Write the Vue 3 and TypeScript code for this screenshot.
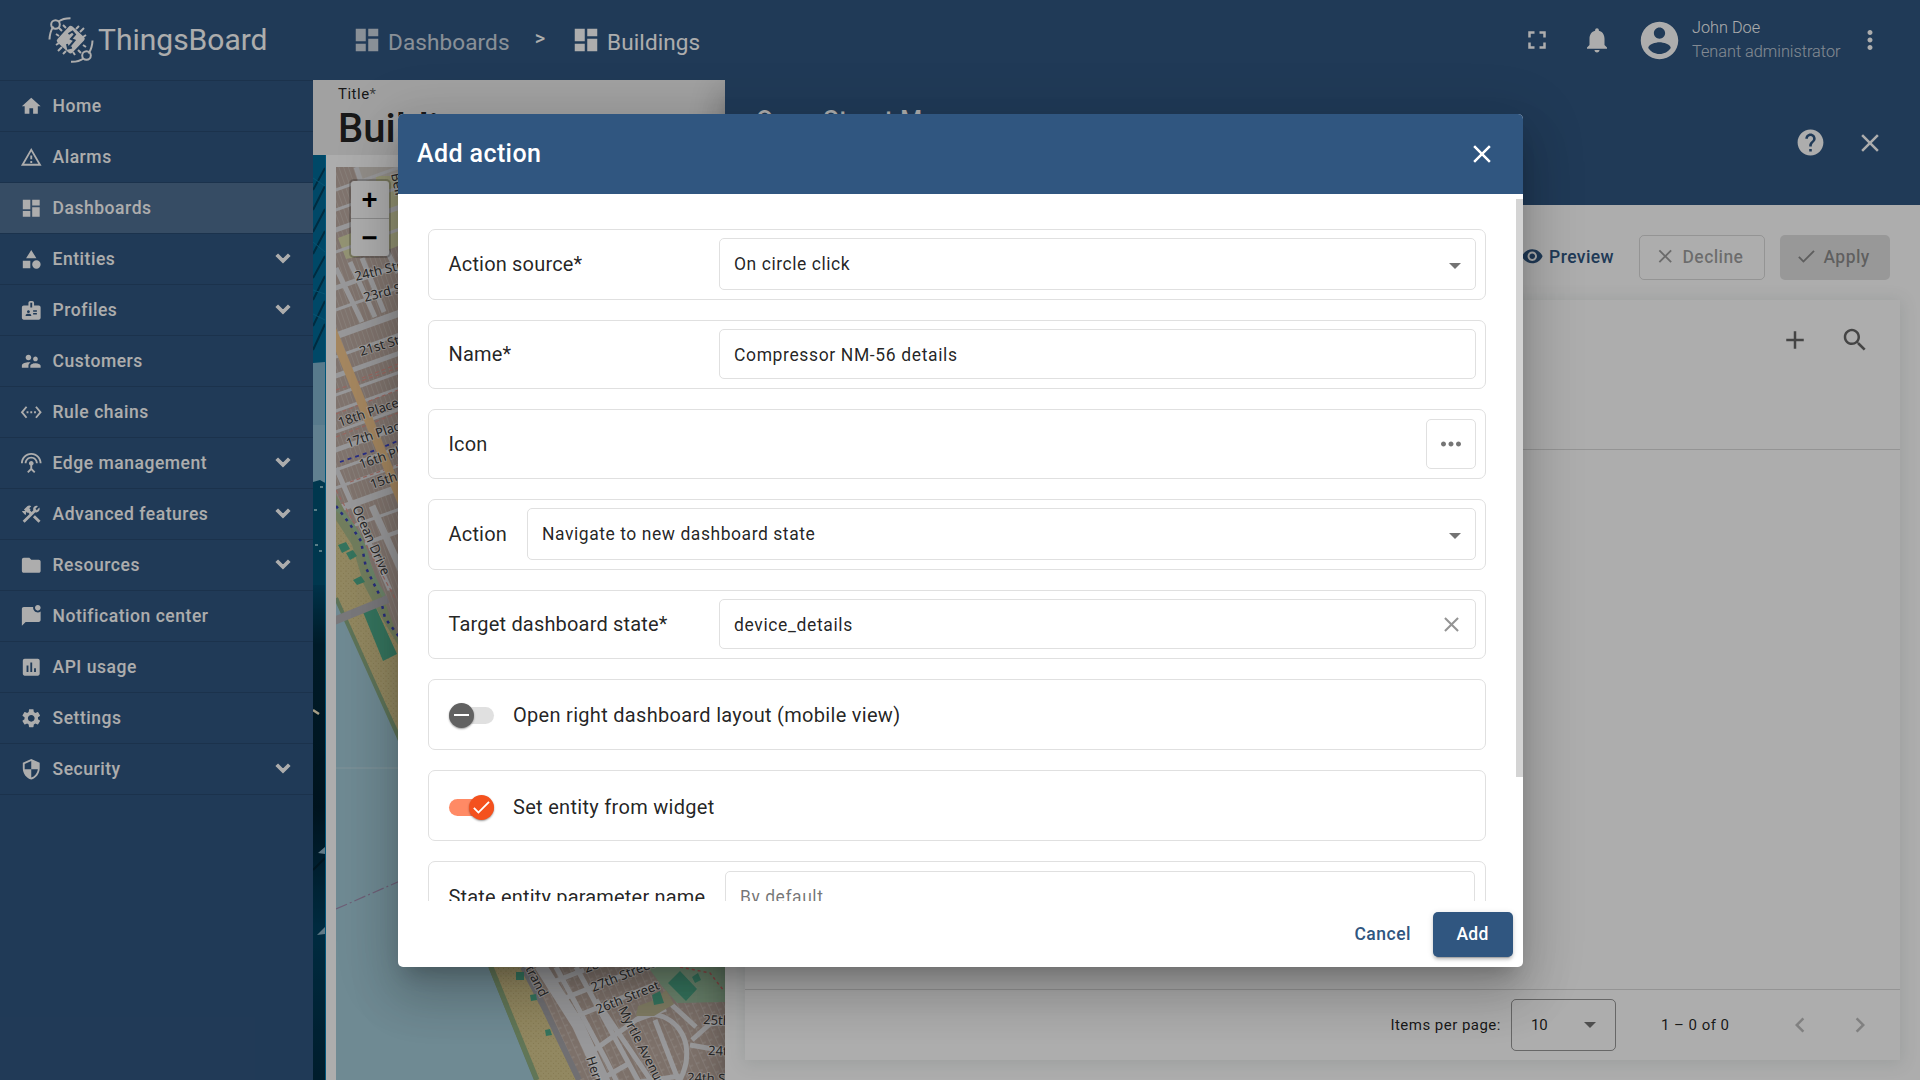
<script setup lang="ts">
interface MenuItem {
  label: string
  icon: string
  expandable?: boolean
  active?: boolean
}

const icons: Record<string, string> = {
  home: 'M10 20v-6h4v6h5v-8h3L12 3 2 12h3v8z',
  alarms: 'M12 5.99 19.53 19H4.47L12 5.99M12 2 1 21h22L12 2zm1 14h-2v2h2v-2zm0-6h-2v4h2v-4z',
  dashboard: 'M3 13h8V3H3v10zm0 8h8v-6H3v6zm10 0h8V11h-8v10zm0-18v6h8V3h-8z',
  entities: 'M12 2 6.5 11h11zM17.5 13a4.5 4.5 0 1 0 0 9 4.5 4.5 0 0 0 0-9zM3 13.5h8v8H3z',
  profiles:
    'M20 7h-5V4c0-1.1-.9-2-2-2h-2c-1.100 0-2 .9-2 2v3H4c-1.100 0-2 .9-2 2v11c0 1.100.9 2 2 2h16c1.100 0 2-.9 2-2V9c0-1.100-.9-2-2-2zM9 12c.83 0 1.500.67 1.500 1.500S9.830 15 9 15s-1.500-.67-1.500-1.500S8.170 12 9 12zm3 6H6v-.75c0-1 2-1.500 3-1.500s3 .5 3 1.500V18zm1-9h-2V4h2v5zm5 7.500h-4V15h4v1.500zm0-3h-4V12h4v1.500z',
  customers:
    'M16.500 12c1.380 0 2.490-1.120 2.490-2.500S17.880 7 16.500 7 14 8.120 14 9.500s1.120 2.500 2.500 2.500zM9 11c1.660 0 2.990-1.340 2.990-3S10.660 5 9 5 6 6.340 6 8s1.340 3 3 3zm7.500 3c-1.830 0-5.500.92-5.500 2.750V19h11v-2.250c0-1.830-3.670-2.750-5.500-2.750zM9 13c-2.330 0-7 1.170-7 3.500V19h7v-2.250c0-.85.33-2.340 2.370-3.470C10.500 13.100 9.660 13 9 13z',
  rules:
    'M7.770 6.760 6.230 5.480.82 12l5.410 6.520 1.540-1.280L3.420 12l4.350-5.240zM7 13h2v-2H7v2zm10-2h-2v2h2v-2zm-6 2h2v-2h-2v2zm6.770-7.520-1.540 1.280L20.580 12l-4.350 5.240 1.540 1.280L23.180 12l-5.410-6.520z',
  edge:
    'M12 5c-3.870 0-7 3.130-7 7h2c0-2.760 2.240-5 5-5s5 2.240 5 5h2c0-3.870-3.130-7-7-7zm1 9.290c.88-.39 1.500-1.260 1.500-2.290 0-1.380-1.120-2.500-2.500-2.500S9.500 10.620 9.500 12c0 1.020.62 1.900 1.500 2.290v3.300L7.590 21 9 22.410l3-3 3 3L16.410 21 13 17.590v-3.300zM12 1C5.930 1 1 5.930 1 12h2c0-4.970 4.030-9 9-9s9 4.030 9 9h2c0-6.070-4.930-11-11-11z',
  tools:
    'm13.783 15.172 2.121-2.121 5.996 5.996-2.121 2.121zM17.500 10c1.930 0 3.500-1.570 3.500-3.500 0-.58-.16-1.120-.41-1.600l-2.700 2.700-1.490-1.490 2.700-2.700c-.48-.25-1.020-.41-1.600-.41C15.570 3 14 4.570 14 6.500c0 .41.080.8.210 1.160l-1.850 1.850-1.780-1.780.71-.71-1.410-1.410L12 3.490c-1.170-1.170-3.070-1.170-4.240 0L4.220 7.030l1.410 1.410H2.810l-.71.71 3.540 3.540.71-.71V9.150l1.410 1.410.71-.71 1.780 1.780-7.410 7.410 2.120 2.120L16.340 9.790c.36.13.75.21 1.160.21z',
  folder: 'M10 4H4c-1.100 0-1.990.9-1.990 2L2 18c0 1.100.9 2 2 2h16c1.100 0 2-.9 2-2V8c0-1.100-.9-2-2-2h-8l-2-2z',
  notify:
    'M22 6.980V16c0 1.100-.9 2-2 2H6l-4 4V4c0-1.100.9-2 2-2h10.100c-.06.320-.1.660-.1 1 0 2.760 2.240 5 5 5 1.130 0 2.160-.39 3-1.020zM16 3c0 1.660 1.340 3 3 3s3-1.340 3-3-1.340-3-3-3-3 1.340-3 3z',
  chart: 'M19 3H5c-1.100 0-2 .9-2 2v14c0 1.100.9 2 2 2h14c1.100 0 2-.9 2-2V5c0-1.100-.9-2-2-2zM9 17H7v-7h2v7zm4 0h-2V7h2v10zm4 0h-2v-4h2v4z',
  settings:
    'M19.140 12.940c.04-.3.060-.61.060-.94 0-.32-.02-.64-.07-.94l2.030-1.580c.18-.14.23-.41.120-.61l-1.920-3.320c-.12-.22-.37-.29-.59-.22l-2.390.96c-.5-.38-1.030-.7-1.620-.94l-.36-2.540c-.04-.24-.24-.41-.48-.41h-3.840c-.24 0-.43.17-.47.41l-.36 2.540c-.59.24-1.130.57-1.620.94l-2.390-.96c-.22-.08-.47 0-.59.22L2.740 8.870c-.12.21-.08.47.120.61l2.030 1.580c-.05.3-.09.630-.09.940s.02.640.07.940l-2.030 1.580c-.18.140-.23.410-.12.610l1.920 3.320c.12.220.37.290.59.220l2.390-.96c.5.380 1.030.7 1.620.94l.36 2.540c.05.240.24.410.48.410h3.840c.24 0 .44-.17.470-.41l.36-2.540c.59-.24 1.130-.56 1.620-.94l2.390.96c.22.080.47 0 .59-.22l1.920-3.320c.12-.22.070-.47-.12-.61l-2.010-1.580zM12 15.600c-1.980 0-3.600-1.620-3.600-3.600s1.620-3.600 3.600-3.600 3.600 1.620 3.600 3.600-1.620 3.600-3.600 3.600z',
  security:
    'M12 1 3 5v6c0 5.550 3.840 10.740 9 12 5.160-1.260 9-6.450 9-12V5l-9-4zm0 10.990h7c-.53 4.120-3.280 7.790-7 8.940V12H5V6.300l7-3.110v8.800z',
  expand: 'M7.410 7.840 12 12.420l4.590-4.580L18 9.250l-6 6-6-6z',
  fullscreen: 'M7 14H5v5h5v-2H7v-3zm-2-4h2V7h3V5H5v5zm12 7h-3v2h5v-5h-2v3zM14 5v2h3v3h2V5h-5z',
  bell: 'M12 22c1.100 0 2-.9 2-2h-4c0 1.100.89 2 2 2zm6-6v-5c0-3.070-1.640-5.640-4.500-6.320V4c0-.83-.67-1.500-1.500-1.500s-1.500.67-1.500 1.500v.68C7.630 5.360 6 7.920 6 11v5l-2 2v1h16v-1l-2-2z',
  account:
    'M12 2C6.480 2 2 6.480 2 12s4.480 10 10 10 10-4.480 10-10S17.520 2 12 2zm0 3c1.660 0 3 1.340 3 3s-1.340 3-3 3-3-1.340-3-3 1.340-3 3-3zm0 14.200c-2.500 0-4.710-1.280-6-3.220.03-1.990 4-3.080 6-3.080 1.990 0 5.970 1.090 6 3.080-1.290 1.940-3.500 3.220-6 3.220z',
  more: 'M12 8c1.100 0 2-.9 2-2s-.9-2-2-2-2 .9-2 2 .9 2 2 2zm0 2c-1.100 0-2 .9-2 2s.9 2 2 2 2-.9 2-2-.9-2-2-2zm0 6c-1.100 0-2 .9-2 2s.9 2 2 2 2-.9 2-2-.9-2-2-2z',
  dots: 'M6 10c-1.100 0-2 .9-2 2s.9 2 2 2 2-.9 2-2-.9-2-2-2zm12 0c-1.100 0-2 .9-2 2s.9 2 2 2 2-.9 2-2-.9-2-2-2zm-6 0c-1.100 0-2 .9-2 2s.9 2 2 2 2-.9 2-2-.9-2-2-2z',
  help: 'M12 2C6.480 2 2 6.480 2 12s4.480 10 10 10 10-4.480 10-10S17.520 2 12 2zm1 17h-2v-2h2v2zm2.070-7.750-.9.920C13.450 12.900 13 13.500 13 15h-2v-.5c0-1.100.45-2.100 1.170-2.830l1.240-1.260c.37-.36.590-.86.590-1.410 0-1.100-.9-2-2-2s-2 .9-2 2H8c0-2.210 1.790-4 4-4s4 1.790 4 4c0 .88-.36 1.680-.93 2.250z',
  close: 'M19 6.410 17.590 5 12 10.590 6.410 5 5 6.410 10.590 12 5 17.590 6.410 19 12 13.410 17.590 19 19 17.590 13.410 12z',
  check: 'M9 16.170 4.830 12l-1.420 1.410L9 19 21 7l-1.410-1.410z',
  eye: 'M12 4.500C7 4.500 2.730 7.610 1 12c1.730 4.390 6 7.500 11 7.500s9.270-3.110 11-7.500c-1.730-4.390-6-7.500-11-7.500zM12 17c-2.760 0-5-2.240-5-5s2.240-5 5-5 5 2.240 5 5-2.240 5-5 5zm0-8c-1.660 0-3 1.340-3 3s1.340 3 3 3 3-1.340 3-3-1.340-3-3-3z',
  add: 'M19 13h-6v6h-2v-6H5v-2h6V5h2v6h6v2z',
  search:
    'M15.500 14h-.79l-.28-.27C15.410 12.590 16 11.110 16 9.500 16 5.910 13.090 3 9.500 3S3 5.910 3 9.500 5.910 16 9.500 16c1.610 0 3.090-.59 4.230-1.570l.27.280v.79l5 4.990L20.490 19l-4.990-5zm-6 0C7.010 14 5 11.990 5 9.500S7.010 5 9.500 5 14 7.010 14 9.500 11.990 14 9.500 14z',
  prev: 'M15.410 7.410 14 6l-6 6 6 6 1.410-1.410L10.830 12z',
  next: 'M10 6 8.590 7.410 13.170 12l-4.580 4.590L10 18l6-6z',
}

const menu: MenuItem[] = [
  { label: 'Home', icon: 'home' },
  { label: 'Alarms', icon: 'alarms' },
  { label: 'Dashboards', icon: 'dashboard', active: true },
  { label: 'Entities', icon: 'entities', expandable: true },
  { label: 'Profiles', icon: 'profiles', expandable: true },
  { label: 'Customers', icon: 'customers' },
  { label: 'Rule chains', icon: 'rules' },
  { label: 'Edge management', icon: 'edge', expandable: true },
  { label: 'Advanced features', icon: 'tools', expandable: true },
  { label: 'Resources', icon: 'folder', expandable: true },
  { label: 'Notification center', icon: 'notify' },
  { label: 'API usage', icon: 'chart' },
  { label: 'Settings', icon: 'settings' },
  { label: 'Security', icon: 'security', expandable: true },
]

interface MapLabel {
  text: string
  x: number
  y: number
  angle: number
}

const mapLabels: MapLabel[] = [
  { text: 'Bell', x: 391, y: 174, angle: 78 },
  { text: '24th Street', x: 356, y: 281, angle: -14 },
  { text: '23rd Street', x: 365, y: 302, angle: -15 },
  { text: '21st Street', x: 361, y: 356, angle: -17 },
  { text: '18th Place', x: 340, y: 427, angle: -19 },
  { text: '17th Place', x: 348, y: 448, angle: -19 },
  { text: '16th Place', x: 361, y: 469, angle: -19 },
  { text: '15th Place', x: 372, y: 489, angle: -19 },
  { text: 'Ocean Drive', x: 352, y: 508, angle: 66 },
  { text: 'Strand', x: 522, y: 962, angle: 63 },
  { text: '28th Street', x: 586, y: 973, angle: -22 },
  { text: '27th Street', x: 593, y: 992, angle: -22 },
  { text: '26th Street', x: 598, y: 1014, angle: -22 },
  { text: 'Myrtle Avenue', x: 618, y: 1009, angle: 63 },
  { text: 'Hermosa', x: 586, y: 1058, angle: 72 },
  { text: '25th Street', x: 703, y: 1024, angle: 3 },
  { text: '24th Street', x: 708, y: 1055, angle: 2 },
  { text: '24th Street', x: 687, y: 1082, angle: 2 },
]

/* Cross streets of the upper map section: y at the left edge and line width */
const crossStreets: number[][] = [
  [192, 3], [212, 3], [232, 5], [254, 3], [290, 5], [312, 3], [338, 7], [359, 3], [378, 5],
  [397, 3], [413, 3], [434, 3], [452, 5], [472, 3], [490, 3], [512, 7], [534, 3], [556, 4],
]
</script>

<template>
  <div class="app">
    <aside class="sidebar">
      <div class="brand">
        <svg class="brand-mark" viewBox="0 0 46 46" fill="none" stroke="#fff">
          <path d="M1.500 22.500C1.700 17 3 13 5.500 9.500M10.500 4.500C14 2 18 1.200 22.500 1.200" stroke-width="2" />
          <circle cx="7.500" cy="7.500" r="4.300" stroke-width="2" />
          <path d="M44.500 23.500c-.2 5.500-1.500 9.500-4 13M35.500 41.500c-3.500 2.500-7.500 3.500-12.500 3.300" stroke-width="2" />
          <circle cx="38.500" cy="38.500" r="4.300" stroke-width="2" />
          <path
            d="M14 14l-3.500-3.500M18 11l-3-3M28 12l3-3M32 15l4-4M35 20l3-2M35 28l3 2M30 33l3 3M25 35l2 3M18 34l-3 3M14 30l-4 4M11 26l-3 2M11 19l-3-2"
            stroke-width="2"
          />
          <path d="M24.500 9.500l11.500 10.500a2.500 2.500 0 0 1 0 3.500L24.500 35.500a3 3 0 0 1-4 0L9.500 25.500a2.500 2.500 0 0 1 0-3.500L20.500 10a3 3 0 0 1 4-.5z" fill="#fff" stroke="none" />
          <path d="M20.500 17l4-2.500 2.500 3-4 4.500 3.500 1.500-6 7M19 27l1 4.500 4-1" stroke="#305680" stroke-width="2" />
        </svg>
        <span>ThingsBoard</span>
      </div>
      <nav>
        <a v-for="item in menu" :key="item.label" class="menu-item" :class="{ active: item.active }">
          <svg class="menu-icon" viewBox="0 0 24 24"><path :d="icons[item.icon]" /></svg>
          <span class="menu-label">{{ item.label }}</span>
          <svg v-if="item.expandable" class="menu-arrow" viewBox="0 0 24 24"><path :d="icons.expand" /></svg>
        </a>
      </nav>
    </aside>

    <div class="main">
      <header class="topbar">
        <div class="crumb faded">
          <svg class="i30" viewBox="0 0 24 24"><path :d="icons.dashboard" /></svg>
          <span>Dashboards</span>
        </div>
        <span class="crumb-sep">&gt;</span>
        <div class="crumb">
          <svg class="i30" viewBox="0 0 24 24"><path :d="icons.dashboard" /></svg>
          <span>Buildings</span>
        </div>
        <div class="topbar-actions">
          <svg class="i30 fullscreen" viewBox="0 0 24 24"><path :d="icons.fullscreen" /></svg>
          <svg class="i30 bell" viewBox="0 0 24 24"><path :d="icons.bell" /></svg>
          <svg class="avatar" viewBox="0 0 24 24"><path :d="icons.account" /></svg>
          <div class="user">
            <span>John Doe</span>
            <span class="role">Tenant administrator</span>
          </div>
          <svg class="i30" viewBox="0 0 24 24"><path :d="icons.more" /></svg>
        </div>
      </header>

      <div class="workspace">
        <section class="board">
          <div class="board-title">
            <span class="board-caption">Title<i>*</i></span>
            <span class="board-name">Buildings</span>
          </div>
          <div class="board-body">
            <svg class="photo" viewBox="313 155 12 925" preserveAspectRatio="none">
              <defs>
                <linearGradient id="photo-bottom" x1="0" y1="0" x2="0" y2="1">
                  <stop offset="0" stop-color="#004a6c" />
                  <stop offset=".12" stop-color="#00293c" />
                  <stop offset=".45" stop-color="#001d2d" />
                  <stop offset=".7" stop-color="#00405f" />
                  <stop offset="1" stop-color="#002b41" />
                </linearGradient>
              </defs>
              <rect x="313" y="155" width="12" height="925" fill="#006b98" />
              <path d="M313 190l12-22M313 210l12-24M313 232l12-23M313 254l12-23M313 278l12-22M313 300l12-24M313 326l12-25M313 350l12-26" stroke="#00405f" stroke-width="2" />
              <path d="M313 178l12 8M313 242l12 10M313 290l12 4M313 314l12 6" stroke="#0a7ca9" />
              <path d="M313 363l12-1v120h-12z" fill="#82b4cf" />
              <path d="M313 425h12v60h-12z" fill="#95c0d6" opacity=".7" />
              <path d="M313 482l7-2 5 3v120h-12z" fill="#005273" />
              <path d="M314 510h3M320 487h3M315 545h3M319 551h3" stroke="#84b9c8" stroke-width="2" />
              <rect x="313" y="585" width="12" height="495" fill="url(#photo-bottom)" />
              <path d="M313 710l6 4" stroke="#f5e9c6" stroke-width="2.500" />
              <path d="M313 770l12-14M313 810l12 10M313 870l12-12" stroke="#002030" stroke-width="2" />
              <path d="M318 853l7-6v7zM317 935l8-8v7z" fill="#8eb3c6" />
            </svg>
            <div class="map-card">
              <svg class="map" viewBox="336 167 389 913">
                <defs>
                  <pattern id="houses" width="4.500" height="14" patternUnits="userSpaceOnUse" patternTransform="rotate(-19)">
                    <rect width="4.500" height="14" fill="#bdaca3" />
                    <path d="M0 0V14" stroke="#cfc3bc" stroke-width="1.200" />
                  </pattern>
                  <pattern id="houses-south" width="7" height="8" patternUnits="userSpaceOnUse" patternTransform="rotate(-24)">
                    <rect width="7" height="8" fill="#b9a79d" />
                    <path d="M0 0V8M0 7h4" stroke="#cfc3bc" stroke-width="1.200" />
                  </pattern>
                  <pattern id="sand" width="5" height="5" patternUnits="userSpaceOnUse">
                    <rect width="5" height="5" fill="#d8c98f" />
                    <circle cx="1" cy="1" r=".6" fill="#bca969" />
                    <circle cx="3.500" cy="3.500" r=".5" fill="#c3b175" />
                  </pattern>
                </defs>
                <rect x="336" y="167" width="389" height="913" fill="url(#houses)" />
                <path d="M358 167h40v26l-30 6z" fill="#d8d2cb" />
                <path d="M338 238l24-9 14 24-30 6zM376 176h22v70l-20 8z" fill="#d9d9aa" />
                <g stroke="#e1e1e3" fill="none">
                  <path v-for="s in crossStreets" :key="s[0]" :d="`M330 ${s[0]}L400 ${s[0] - 25}`" :stroke-width="s[1]" />
                  <path d="M356 167l22 66 20 40M336 268l26 54M350 262l25 55M362 258l22 54" stroke-width="5" />
                  <path d="M336 468l22 50 32 72" stroke-width="5" />
                  <path d="M372 506l30 66" stroke-width="7" />
                </g>
                <g stroke="#e0988e" fill="none" stroke-dasharray="4 3" stroke-width="1.200">
                  <path d="M336 390l62-22M336 414l62-24M336 437l62-24M350 482l48-17M336 490l60 110M362 378l36-14" />
                </g>
                <path d="M340 462l36-12 24-10" stroke="#3c44c8" stroke-width="1.800" stroke-dasharray="4 4" fill="none" />
                <path d="M332 330L402 502" stroke="#f3c78e" stroke-width="9" fill="none" />
                <path d="M336 495l28 50 16 44 18 48v110L336 600z" fill="#a9ba8b" />
                <path d="M336 520l16 25 12 40 16 30 18 30v85L336 600z" fill="url(#sand)" />
                <path d="M336 508c14 12 26 28 30 46s10 30 18 42" stroke="#9fc39c" stroke-width="4" fill="none" />
                <path d="M336 506l13 17 12 18 5 27 14 28 5 22 15 20" stroke="#3c44b8" stroke-width="2.500" stroke-dasharray="3 5" fill="none" />
                <path d="M338 545l8-3 4 7-8 4zM346 553l7-3 4 6-7 4zM353 580l8-4 4 6-8 3zM363 612l13-4 21 46-14 7z" fill="#4fac8b" />
                <path d="M336 598l62 138 56 132 37 99 46 113H336z" fill="#a4ccd9" />
                <path d="M336 598l62 138 56 132 36 98 46 114" stroke="#8bab84" stroke-width="4" fill="none" />
                <path d="M334 621l54-22" stroke="#b3b1b5" stroke-width="8" />
                <path d="M336 768h64" stroke="#bed9e1" />
                <path d="M336 909l64-28" stroke="#a28caf" stroke-width="1.200" stroke-dasharray="12 3 2 3" />

                <path d="M491 967h234v113H537z" fill="url(#houses-south)" />
                <path d="M491 967h31l22 45 34 68h-41z" fill="url(#sand)" />
                <path d="M491 967l46 113" stroke="#8fae80" stroke-width="5" />
                <path d="M523 967l20 38 36 75" stroke="#a6a4a8" stroke-width="6" fill="none" />
                <path d="M516 972h8v8h-8zM530 995l6-1 1 6-6 1zM545 1030l5-1 2 6-6 1z" fill="#4fac8b" />
                <g stroke="#e1e1e3" fill="none" stroke-width="5">
                  <path d="M540 965l38 60 28 60" stroke-width="12" />
                  <path d="M556 967l50 93 12 24M576 967l64 117M596 1000l56 82" />
                  <path d="M548 984l36-14M560 1000l96-38M572 1018l84-34M586 1056l50-36 30-11" />
                  <path d="M636 1020c20-14 46 2 50 25 3 18-3 30-8 38M655 1020l24 62M672 1005l24 22M690 1045l35 6M692 1040l18-16 16-2" />
                  <path d="M600 1080l28-16M640 1082l40-6" />
                </g>
                <path d="M648 967h77v35l-48 1-16-18z" fill="#9fc4a2" />
                <path d="M654 1000l12-10 8 14-20 12h-18l2-10z" fill="#beb894" />
                <path d="M668 983l12-12 17 18-11 12zM652 995l8-4 4 12-10 2zM692 977l6-4 3 7-6 3z" fill="#4fac8b" />
                <path d="M680 967l30 6 14 18" stroke="#d8706f" stroke-width="1.500" stroke-dasharray="3 3" fill="none" />
                <text v-for="(l, i) in mapLabels" :key="i" :transform="`translate(${l.x} ${l.y}) rotate(${l.angle})`" class="map-text">{{ l.text }}</text>
              </svg>
              <div class="map-zoom">
                <span>+</span>
                <span>−</span>
              </div>
            </div>
          </div>
        </section>

        <section class="drawer">
          <div class="drawer-head">
            <h2>Open Street Map</h2>
            <div class="drawer-tools">
              <svg viewBox="0 0 24 24" class="help"><path :d="icons.help" /></svg>
              <svg viewBox="0 0 24 24" class="i30"><path :d="icons.close" /></svg>
            </div>
          </div>
          <div class="drawer-bar">
            <span class="btn preview"><svg viewBox="0 0 24 24"><path :d="icons.eye" /></svg>Preview</span>
            <span class="btn decline"><svg viewBox="0 0 24 24"><path :d="icons.close" /></svg>Decline</span>
            <span class="btn apply"><svg viewBox="0 0 24 24"><path :d="icons.check" /></svg>Apply</span>
          </div>
          <div class="table-card">
            <div class="table-head">
              <svg viewBox="0 0 24 24" class="i30"><path :d="icons.add" /></svg>
              <svg viewBox="0 0 24 24" class="i30"><path :d="icons.search" /></svg>
            </div>
            <div class="table-body"></div>
            <div class="paginator">
              <span class="per-page">Items per page:</span>
              <span class="page-size">10<i class="caret"></i></span>
              <span class="range">1 – 0 of 0</span>
              <svg viewBox="0 0 24 24" class="i30 nav-arrow"><path :d="icons.prev" /></svg>
              <svg viewBox="0 0 24 24" class="i30 nav-arrow"><path :d="icons.next" /></svg>
            </div>
          </div>
        </section>
      </div>
    </div>

    <div class="backdrop">
      <div class="dialog">
        <header class="dialog-head">
          <h1>Add action</h1>
          <svg viewBox="0 0 24 24" class="i30"><path :d="icons.close" /></svg>
        </header>
        <div class="dialog-body">
          <div class="rows">
            <div class="row tall">
              <label>Action source*</label>
              <div class="field select">On circle click<i class="caret"></i></div>
            </div>
            <div class="row low">
              <label>Name*</label>
              <div class="field">Compressor NM-56 details</div>
            </div>
            <div class="row mid">
              <label class="centered">Icon</label>
              <div class="icon-button"><svg viewBox="0 0 24 24"><path :d="icons.dots" /></svg></div>
            </div>
            <div class="row tall">
              <label class="narrow">Action</label>
              <div class="field select wide">Navigate to new dashboard state<i class="caret"></i></div>
            </div>
            <div class="row low">
              <label>Target dashboard state*</label>
              <div class="field">device_details<svg class="clear" viewBox="0 0 24 24"><path :d="icons.close" /></svg></div>
            </div>
            <div class="row tall">
              <span class="toggle"><span class="knob"><i></i></span></span>
              <span class="toggle-label">Open right dashboard layout (mobile view)</span>
            </div>
            <div class="row tall shifted">
              <span class="toggle on">
                <span class="knob"><svg viewBox="0 0 24 24"><path :d="icons.check" /></svg></span>
              </span>
              <span class="toggle-label">Set entity from widget</span>
            </div>
            <div class="row tall last">
              <label>State entity parameter name</label>
              <div class="field placeholder">By default</div>
            </div>
          </div>
          <div class="scrollbar"></div>
        </div>
        <footer class="dialog-foot">
          <span class="cancel">Cancel</span>
          <span class="add">Add</span>
        </footer>
      </div>
    </div>
  </div>
</template>

<style>
html,
body {
  margin: 0;
  overflow: hidden;
}
</style>

<style scoped>
* {
  box-sizing: border-box;
}
.app {
  position: relative;
  display: flex;
  width: 1920px;
  height: 1080px;
  overflow: hidden;
  font-family: Roboto, 'Liberation Sans', sans-serif;
  color: rgba(0, 0, 0, 0.87);
  font-size: 17.5px;
}
svg {
  display: block;
  flex: none;
  fill: currentColor;
}
.i30 {
  width: 30px;
  height: 30px;
}

/* sidebar */
.sidebar {
  width: 313px;
  background: #305680;
  color: #fff;
}
.brand {
  height: 80px;
  padding-left: 48px;
  display: flex;
  align-items: center;
  gap: 4px;
  white-space: nowrap;
}
.brand-mark {
  width: 46px;
  height: 46px;
  fill: none;
}
.brand span {
  padding-bottom: 2px;
  font-weight: 400;
  font-size: 30px;
}
nav {
  border-bottom: 1px solid #294b70;
}
.menu-item {
  display: flex;
  align-items: center;
  height: 51px;
  padding: 0 17px 0 20px;
  border-top: 1px solid #294b70;
  font-weight: 500;
  letter-spacing: 0.54px;
}
.menu-item.active {
  background: rgba(255, 255, 255, 0.155);
}
.menu-icon {
  width: 22.5px;
  height: 22.5px;
  margin-right: 10px;
}
.menu-label {
  flex: 1;
}
.menu-arrow {
  width: 26px;
  height: 26px;
  stroke: currentColor;
  stroke-width: 1.4;
}

/* top bar */
.main {
  flex: 1;
  min-width: 0;
}
.topbar {
  display: flex;
  align-items: center;
  height: 80px;
  padding: 0 35px 0 39px;
  background: #305680;
  color: #fff;
}
.crumb {
  display: flex;
  align-items: center;
  gap: 6px;
  font-size: 22.5px;
  letter-spacing: 0.12px;
}
.crumb span {
  padding-top: 4px;
}
.faded {
  opacity: 0.75;
}
.crumb-sep {
  margin: -4px 26px 0 25px;
  font-size: 20px;
  font-weight: 500;
}
.topbar-actions {
  display: flex;
  align-items: center;
  margin-left: auto;
}
.fullscreen {
  margin-right: 30px;
}
.bell {
  margin-right: 25px;
}
.avatar {
  width: 45px;
  height: 45px;
  margin-right: 10px;
}
.user {
  display: flex;
  flex-direction: column;
  width: 163px;
  padding-bottom: 1px;
  font-size: 16.25px;
  line-height: 24px;
  font-weight: 300;
}
.role {
  opacity: 0.7;
}

/* dashboard */
.workspace {
  position: relative;
  height: 1000px;
  background: #fff;
}
.board {
  width: 412px;
  height: 1000px;
}
.board-title {
  display: flex;
  flex-direction: column;
  height: 75px;
  padding: 5px 0 0 25px;
  background: #eee;
}
.board-caption {
  font-size: 15px;
  line-height: 18px;
  letter-spacing: 0.5px;
}
.board-caption i {
  font-style: normal;
  opacity: 0.7;
}
.board-name {
  font-size: 40px;
  line-height: 52px;
  font-weight: 500;
}
.board-body {
  display: flex;
  height: 925px;
}
.photo {
  width: 13px;
  height: 925px;
  border-right: 1px solid #0080b5;
}
.map-card {
  position: relative;
  flex: 1;
  padding: 12px 0 0 10px;
}
.map {
  width: 389px;
  height: 913px;
}
.map-text {
  font: 13px 'Noto Sans', sans-serif;
  fill: #3a3a3a;
  stroke: rgba(255, 255, 255, 0.55);
  stroke-width: 2px;
  paint-order: stroke;
}
.map-zoom {
  position: absolute;
  left: 22.5px;
  top: 24px;
  width: 42px;
  display: flex;
  flex-direction: column;
  border: 2.5px solid rgba(0, 0, 0, 0.2);
  border-radius: 5px;
  background: #fff;
  background-clip: padding-box;
  color: #000;
}
.map-zoom span {
  height: 37.5px;
  text-align: center;
  font: bold 27.5px/37px 'Liberation Sans', sans-serif;
}
.map-zoom span:first-child {
  border-bottom: 1px solid #ccc;
}

/* drawer */
.drawer {
  position: absolute;
  inset: 0 0 0 412px;
  display: flex;
  flex-direction: column;
  background: #fff;
  box-shadow: 0 10px 13px -6px rgba(0, 0, 0, 0.2), 0 20px 30px 3px rgba(0, 0, 0, 0.14), 0 8px 38px 6px rgba(0, 0, 0, 0.12);
  clip-path: inset(0 0 0 -60px);
}
.drawer-head {
  display: flex;
  justify-content: space-between;
  height: 125px;
  padding: 0 35px 0 31px;
  background: #305680;
  color: #fff;
}
.drawer-head h2 {
  margin: 26px 0 0;
  font-size: 25px;
  line-height: 30px;
  font-weight: 500;
  letter-spacing: 0.5px;
}
.drawer-tools {
  display: flex;
  align-items: center;
  gap: 29px;
}
.help {
  width: 31px;
  height: 31px;
}
.drawer-bar {
  display: flex;
  align-items: center;
  justify-content: flex-end;
  height: 95px;
  padding: 10px 30px 0 0;
}
.btn {
  display: flex;
  align-items: center;
  height: 45px;
  padding-bottom: 2px;
  border-radius: 5px;
  font-weight: 500;
  letter-spacing: 0.42px;
}
.btn svg {
  width: 22.5px;
  height: 22.5px;
  margin-right: 6px;
}
.preview {
  color: #305680;
  margin-right: 25px;
}
.decline {
  width: 126px;
  padding-left: 14px;
  margin-right: 15px;
  border: 1px solid rgba(0, 0, 0, 0.14);
  color: rgba(0, 0, 0, 0.38);
}
.apply {
  width: 110px;
  padding-left: 15px;
  background: rgba(0, 0, 0, 0.12);
  color: rgba(0, 0, 0, 0.38);
}
.table-card {
  display: flex;
  flex-direction: column;
  width: 1155px;
  height: 760px;
  margin-left: 20px;
  box-shadow: 0 2px 16px 2px rgba(60, 90, 80, 0.12);
}
.table-head {
  display: flex;
  justify-content: flex-end;
  gap: 30px;
  height: 150px;
  padding: 25px 30px 0 0;
  border-bottom: 1px solid rgba(0, 0, 0, 0.14);
  color: rgba(0, 0, 0, 0.6);
}
.table-body {
  flex: 1;
}
.paginator {
  display: flex;
  align-items: center;
  justify-content: flex-end;
  height: 71px;
  padding-right: 25px;
  border-top: 1px solid rgba(0, 0, 0, 0.14);
  font-size: 15px;
}
.page-size {
  display: flex;
  align-items: center;
  justify-content: space-between;
  width: 105px;
  height: 52px;
  margin: 0 45px 0 10px;
  padding: 0 19px 0 19px;
  border: 1px solid rgba(0, 0, 0, 0.4);
  border-radius: 5px;
}
.per-page,
.range {
  letter-spacing: 0.48px;
}
.nav-arrow {
  color: rgba(0, 0, 0, 0.26);
  margin-left: 30px;
}
.range {
  margin-right: 25.5px;
}
.caret {
  width: 0;
  height: 0;
  border: 6.5px solid transparent;
  border-top-color: rgba(0, 0, 0, 0.55);
  border-bottom: 0;
}

/* dialog */
.backdrop {
  position: absolute;
  inset: 0;
  background: rgba(0, 0, 0, 0.32);
}
.dialog {
  width: 1125px;
  height: 853px;
  margin: 114px 0 0 398px;
  border-radius: 5px;
  overflow: hidden;
  background: #fff;
  box-shadow: 0 14px 19px -9px rgba(0, 0, 0, 0.2), 0 30px 48px 4px rgba(0, 0, 0, 0.14), 0 11px 58px 10px rgba(0, 0, 0, 0.12);
}
.dialog-head {
  display: flex;
  align-items: center;
  justify-content: space-between;
  height: 80px;
  padding: 0 26px 0 19px;
  background: #305680;
  color: #fff;
}
.dialog-head h1 {
  margin: 0;
  padding-bottom: 2px;
  font-size: 25px;
  font-weight: 500;
  letter-spacing: 0.4px;
}
.dialog-body {
  display: flex;
  justify-content: space-between;
  height: 707px;
  overflow: hidden;
}
.rows {
  display: flex;
  flex-direction: column;
  gap: 20px;
  width: 1058px;
  margin: 35px 0 0 30px;
}
.row {
  display: flex;
  flex: none;
  align-items: center;
  padding: 0 9px 0 19.5px;
  border: 1px solid #e0e0e0;
  border-radius: 7px;
  font-size: 20px;
  letter-spacing: 0.3px;
}
.tall {
  height: 71px;
}
.mid {
  height: 70px;
}
.low {
  height: 69px;
}
.row label {
  flex: 1;
  padding-bottom: 2px;
  letter-spacing: 0.18px;
  white-space: nowrap;
}
.row .centered,
.last label {
  padding-bottom: 0;
}
.row .narrow {
  flex: none;
  width: 78.5px;
}
.field {
  display: flex;
  align-items: center;
  justify-content: space-between;
  width: 757px;
  height: 50px;
  margin-bottom: 1px;
  padding: 1px 14px 0;
  border: 1px solid #e0e0e0;
  border-radius: 5px;
  font-size: 17.5px;
  letter-spacing: 0.63px;
}
.select {
  height: 52px;
  padding-top: 0;
  letter-spacing: 0.55px;
}
.select .caret {
  margin-top: 3px;
}
.wide {
  flex: 1;
}
.last {
  padding-right: 10px;
}
.placeholder {
  width: 750px;
  height: 51px;
  padding-top: 2px;
  letter-spacing: 0.55px;
  color: rgba(0, 0, 0, 0.55);
}
.clear {
  width: 25px;
  height: 25px;
  margin-right: -3px;
  color: rgba(0, 0, 0, 0.42);
}
.icon-button {
  display: flex;
  align-items: center;
  justify-content: center;
  width: 50px;
  height: 50px;
  border: 1px solid #e0e0e0;
  border-radius: 5px;
  color: rgba(0, 0, 0, 0.54);
}
.icon-button svg {
  width: 30px;
  height: 30px;
}
.toggle {
  display: flex;
  align-items: center;
  width: 45px;
  height: 17px;
  margin: 1px 19.5px 0 0;
  border-radius: 9px;
  background: #e0e0e0;
}
.shifted {
  padding-top: 2px;
}
.knob {
  display: flex;
  align-items: center;
  justify-content: center;
  width: 25px;
  height: 25px;
  border-radius: 50%;
  background: #616161;
  color: #fff;
  box-shadow: 0 1px 2px rgba(0, 0, 0, 0.4);
}
.knob i {
  width: 15px;
  height: 2px;
  background: #fff;
}
.knob svg {
  width: 22.5px;
  height: 22.5px;
}
.toggle.on {
  justify-content: flex-end;
  background: #ff8a65;
}
.on .knob {
  background: #f4511e;
}
.scrollbar {
  width: 7px;
  height: 578px;
  margin-top: 5px;
  background: #d4d4d4;
}
.dialog-foot {
  display: flex;
  align-items: center;
  justify-content: flex-end;
  height: 66px;
  padding: 0 10px 0 0;
  font-weight: 500;
  color: #305680;
}
.cancel {
  margin: 0 22px 0 0;
  letter-spacing: 0.5px;
}
.add {
  width: 80px;
  height: 45px;
  padding-right: 1px;
  border-radius: 5px;
  background: #305680;
  color: #fff;
  letter-spacing: 0.3px;
  line-height: 44px;
  text-align: center;
  box-shadow: 0 4px 1px -3px rgba(0, 0, 0, 0.2), 0 3px 3px rgba(0, 0, 0, 0.14), 0 1px 6px rgba(0, 0, 0, 0.12);
}
</style>
